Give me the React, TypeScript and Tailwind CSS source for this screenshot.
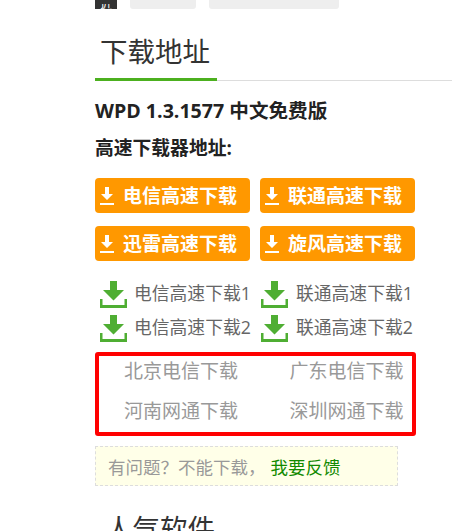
function WhiteIcon() {
  return (
    <svg width="16" height="20" viewBox="0 0 16 20" className="shrink-0">
      <path d="M6 1h4v7h4l-6 6-6-6h4z" fill="#fff" />
      <rect x="1" y="17" width="14" height="2" fill="#fff" />
    </svg>
  );
}

function GreenIcon() {
  return (
    <svg width="27" height="27" viewBox="0 0 27 27" className="-mt-[2px] shrink-0">
      <path d="M10 0h7v9h7l-10.500 10.500L3 9h7z" fill="#4fae33" />
      <path d="M1 18v7.500h25V18" fill="none" stroke="#4fae33" strokeWidth="3" />
    </svg>
  );
}

function OrangeButton({ label }: { label: string }) {
  return (
    <a className="flex h-[35px] w-[155px] items-center gap-[8px] rounded-[4px] bg-[#ff9800] pl-[4px] text-[19px] font-bold text-white">
      <WhiteIcon />
      <span className="translate-y-[1px]">{label}</span>
    </a>
  );
}

function GreenLink({ label, wide }: { label: string; wide?: boolean }) {
  return (
    <a className="flex h-[34px] w-[161px] items-center pl-[5px] text-[17.8px] leading-[27px] text-[#666]">
      <GreenIcon />
      <span className={wide ? "ml-[8px] -translate-y-[2px] whitespace-nowrap" : "ml-[7px] -translate-y-[2px] whitespace-nowrap"}>{label}</span>
    </a>
  );
}

export default function App() {
  return (
    <div className="h-[531px] w-[452px] overflow-hidden bg-white pl-[95px] font-['Open_Sans','Noto_Sans_CJK_SC',sans-serif]">
      <div className="flex h-[9px] gap-[13px] overflow-hidden">
        <div className="flex h-[9px] w-[22px] items-end justify-center bg-[#333] text-[12px] leading-[9px] text-white">
          <span className="block h-[5px] overflow-hidden leading-[2px]">近</span>
        </div>
        <div className="h-[9px] w-[66px] rounded-b-[3px] bg-[#eee]" />
        <div className="h-[9px] w-[130px] rounded-b-[3px] bg-[#eee]" />
      </div>

      <div className="mt-[22px] h-[50px] border-b border-[#ddd]">
        <h2 className="h-[50px] w-[122px] border-b-[3px] border-[#4cb01f] pl-[5px] text-[27.5px] font-normal leading-[42px] text-[#333]">
          下载地址
        </h2>
      </div>

      <p className="mt-[15px] text-[19.6px] font-bold leading-[30px] text-[#222]">WPD 1.3.1577 中文免费版</p>
      <p className="mt-[7px] text-[18.8px] font-bold leading-[30px] text-[#222]">高速下载器地址:</p>

      <div className="mt-[15px] grid w-[320px] grid-cols-[155px_155px] gap-x-[10px] gap-y-[13px]">
        <OrangeButton label="电信高速下载" />
        <OrangeButton label="联通高速下载" />
        <OrangeButton label="迅雷高速下载" />
        <OrangeButton label="旋风高速下载" />
      </div>

      <div className="mt-[17px] grid w-[322px] grid-cols-[161px_161px]">
        <GreenLink label="电信高速下载1" />
        <GreenLink label="联通高速下载1" wide />
        <GreenLink label="电信高速下载2" />
        <GreenLink label="联通高速下载2" wide />
      </div>

      <div className="mt-[6px] grid h-[84px] w-[321px] grid-cols-2 content-center rounded-[3px] border-4 border-[#f00] text-[19px] leading-[40px] text-[#999]">
        <span className="-translate-y-[3px] pl-[25px]">北京电信下载</span>
        <span className="-translate-y-[3px] pl-[34px]">广东电信下载</span>
        <span className="-translate-y-[3px] pl-[25px]">河南网通下载</span>
        <span className="-translate-y-[3px] pl-[34px]">深圳网通下载</span>
      </div>

      <div className="mt-[10px] flex h-[40px] w-[303px] items-center border border-dashed border-[#ddd] bg-[#ffffe8] pl-[12px] text-[17.5px] text-[#999]">
        <span className="translate-y-[1px]">有问题？不能下载，</span>
        <span className="ml-[5px] translate-y-[1px] text-[#128a00]">我要反馈</span>
      </div>

      <h2 className="mt-[22px] pl-[10px] text-[27.5px] font-normal leading-[42px] text-[#333]">人气软件</h2>
    </div>
  );
}
